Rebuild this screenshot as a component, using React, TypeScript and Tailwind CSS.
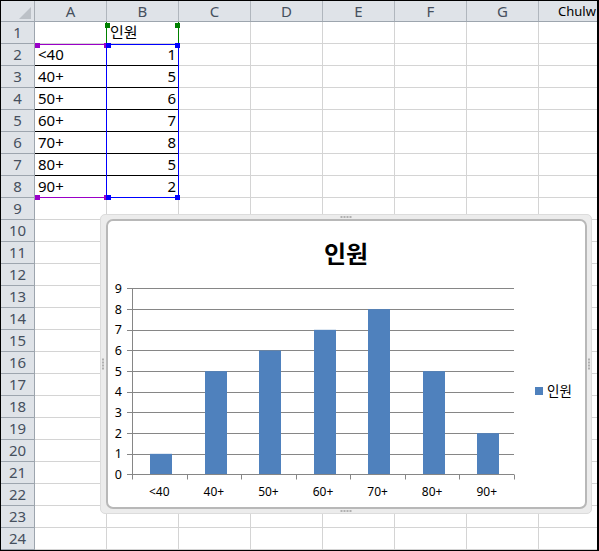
import React from 'react';

const font = { fontFamily: '"Noto Sans", "Noto Sans CJK KR", sans-serif' };
const columns = ['A', 'B', 'C', 'D', 'E', 'F', 'G', ''];
const rows = Array.from({ length: 24 }, (_, i) => i + 1);
const data: Record<number, [string, string]> = {
  2: ['<40', '1'],
  3: ['40+', '5'],
  4: ['50+', '6'],
  5: ['60+', '7'],
  6: ['70+', '8'],
  7: ['80+', '5'],
  8: ['90+', '2'],
};
const values = [1, 5, 6, 7, 8, 5, 2];
const labels = ['<40', '40+', '50+', '60+', '70+', '80+', '90+'];

const Handle = ({ className }: { className: string }) => (
  <div className={`absolute h-[5px] w-[5px] ${className}`} />
);

const Dots = ({ vertical }: { vertical?: boolean }) => (
  <div className={`flex gap-[1px] ${vertical ? 'flex-col' : 'flex-row'}`}>
    {[0, 1, 2, 3].map((i) => (
      <div key={i} className="h-[2px] w-[2px] bg-[#b0b0b0]" />
    ))}
  </div>
);

const Chart = () => {
  const left = 24;
  const right = 406;
  const base = 253.5;
  const step = 20.67;
  const cat = (right - left) / 7;
  return (
    <svg width="477" height="286" className="block">
      <text x="238" y="42" textAnchor="middle" fontSize="24" fontWeight="700" fill="#000" style={font}>인원</text>
      {[1, 2, 3, 4, 5, 6, 7, 8, 9].map((n) => {
        const y = Math.round(base - n * step) + 0.5;
        return <line key={n} x1={left - 5} x2={right} y1={y} y2={y} stroke="#868686" />;
      })}
      {values.map((v, i) => (
        <rect key={i} x={Math.round(left + cat * i + 18)} y={base - v * step} width="22" height={v * step} fill="#4f81bd" />
      ))}
      <line x1={left - 5} x2={right} y1={base} y2={base} stroke="#868686" />
      <line x1={left + 0.5} x2={left + 0.5} y1={base - 9 * step} y2={base + 5} stroke="#868686" />
      {labels.map((_, i) => {
        const x = Math.round(left + cat * (i + 1)) + 0.5;
        return <line key={i} x1={x} x2={x} y1={base} y2={base + 5} stroke="#868686" />;
      })}
      {[0, 1, 2, 3, 4, 5, 6, 7, 8, 9].map((n) => (
        <text key={n} x="14" y={base - n * step + 4.5} textAnchor="end" fontSize="12.5" fill="#000" style={font}>{n}</text>
      ))}
      {labels.map((l, i) => (
        <text key={l} x={left + cat * i + cat / 2} y="275" textAnchor="middle" fontSize="12" fill="#000" style={font}>{l}</text>
      ))}
      <rect x="427" y="166" width="8" height="8" fill="#4f81bd" />
      <text x="439" y="175" fontSize="13.5" fill="#000" style={font}>인원</text>
    </svg>
  );
};

export default function App() {
  return (
    <div className="relative h-[551px] w-[599px] overflow-hidden border-t border-r-2 border-b border-l border-black bg-white" style={font}>
      <div className="flex h-[21px] border-b border-[#9da5ae] bg-[#dfe3e8]">
        <div className="relative w-[34px] shrink-0 border-r border-[#a6acb3]">
          <div className="absolute bottom-[2px] right-[3px] h-0 w-0 border-b-[12px] border-l-[12px] border-b-[#bcc1c7] border-l-transparent" />
        </div>
        {columns.map((c, i) => (
          <div key={i} className="flex w-[72px] shrink-0 items-center justify-center border-r border-[#b0b6bd] text-[15px] text-[#46505e]">
            {c}
          </div>
        ))}
      </div>

      {rows.map((r) => (
        <div key={r} className="flex h-[22px]">
          <div className="flex w-[34px] shrink-0 items-center justify-center border-r border-b border-[#9da5ae] bg-[#dfe3e8] text-[15px] text-[#46505e]">
            {r}
          </div>
          {columns.map((_, i) => {
            const inData = data[r] && i < 2;
            return (
              <div
                key={i}
                className={`flex w-[72px] shrink-0 items-center border-r border-b pl-[3px] pr-[2px] text-[15px] text-black ${
                  inData ? 'border-b-black' : 'border-b-[#d4d4d4]'
                } border-r-[#d4d4d4]`}
              >
                {r === 1 && i === 1 && <span>인원</span>}
                {data[r] && i === 0 && <span>{data[r][0]}</span>}
                {data[r] && i === 1 && <span className="ml-auto">{data[r][1]}</span>}
              </div>
            );
          })}
        </div>
      ))}

      {/* selection ranges */}
      <div className="absolute left-[34px] top-[43px] h-px w-[72px] bg-[#9a00c8]" />
      <div className="absolute left-[34px] top-[196px] h-px w-[72px] bg-[#9a00c8]" />
      <div className="absolute left-[105px] top-[21px] h-[22px] w-[73px] border-x border-[#008000]" />
      <div className="absolute left-[105px] top-[43px] h-[154px] w-[73px] border border-[#0000ff]" />
      <Handle className="left-[34px] top-[42px] h-[4px] w-[4px] bg-[#9a00c8]" />
      <Handle className="left-[34px] top-[194px] h-[4px] w-[4px] bg-[#9a00c8]" />
      <Handle className="left-[103px] top-[42px] h-[4px] w-[3px] bg-[#9a00c8]" />
      <Handle className="left-[103px] top-[194px] h-[4px] w-[3px] bg-[#9a00c8]" />
      <Handle className="left-[104px] top-[22px] h-[4px] bg-[#008000]" />
      <Handle className="left-[174px] top-[22px] h-[4px] bg-[#008000]" />
      <Handle className="left-[105px] top-[42px] bg-[#0000ff]" />
      <Handle className="left-[174px] top-[42px] bg-[#0000ff]" />
      <Handle className="left-[105px] top-[194px] bg-[#0000ff]" />
      <Handle className="left-[174px] top-[194px] bg-[#0000ff]" />

      {/* account name over the header */}
      <div className="absolute left-[557px] top-[1px] text-[13px] leading-[18px] text-black">Chulw</div>

      {/* chart frame */}
      <div className="absolute left-[99px] top-[213px] flex h-[300px] w-[492px] items-center justify-center rounded-[5px] border border-[#dcdcdc] bg-[#ececec]">
        <div className="overflow-hidden rounded-[7px] border-2 border-[#b8b8b8] bg-white">
          <Chart />
        </div>
        <div className="absolute left-1/2 top-[1px] -translate-x-1/2"><Dots /></div>
        <div className="absolute bottom-[1px] left-1/2 -translate-x-1/2"><Dots /></div>
        <div className="absolute left-[1px] top-1/2 -translate-y-1/2"><Dots vertical /></div>
        <div className="absolute right-[1px] top-1/2 -translate-y-1/2"><Dots vertical /></div>
      </div>
    </div>
  );
}
